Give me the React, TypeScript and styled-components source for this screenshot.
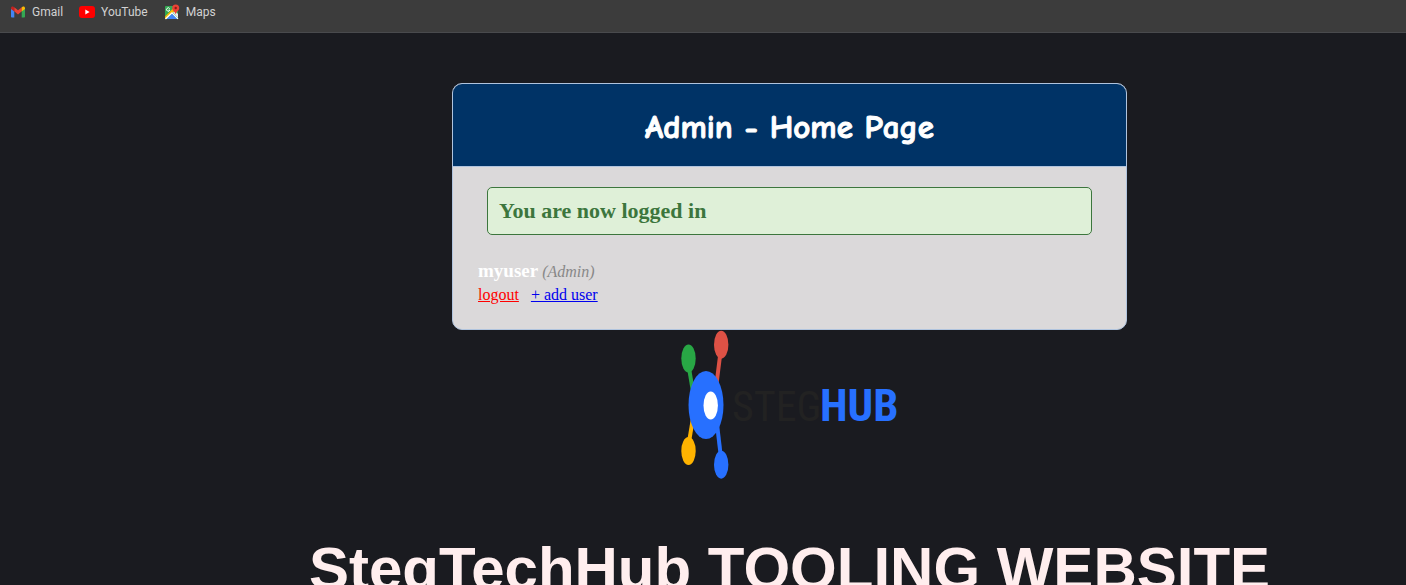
import React from "react";
import styled, { createGlobalStyle } from "styled-components";

const GlobalStyle = createGlobalStyle`
  * { box-sizing: border-box; }
  body {
    margin: 0;
    background: #1a1b20;
    font-family: "Times New Roman", "Liberation Serif", serif;
    font-size: 16px;
  }
`;

const Page = styled.div`
  display: flex;
  flex-direction: column;
  height: 100vh;
  overflow: hidden;
`;

const BookmarksBar = styled.nav`
  display: flex;
  flex: none;
  gap: 16px;
  padding: 4px 10px 12px;
  background: #3c3c3c;
  border-bottom: 1px solid #494a4d;
`;

const Bookmark = styled.a`
  display: flex;
  align-items: center;
  gap: 6px;
  color: #d2d2d2;
  font: 12px/16px "Segoe UI", Roboto, sans-serif;
  text-decoration: none;

  svg { display: block; flex: none; }
`;

const Main = styled.main`
  display: flex;
  flex-direction: column;
  align-items: center;
  padding: 50px 0 0 173px;
`;

const Card = styled.section`
  width: 675px;
  max-width: 100%;
  overflow: hidden;
  background: #dbd9da;
  border: 1px solid #b0c4de;
  border-radius: 10px;
`;

const CardHeader = styled.header`
  padding: 24px 20px 20px;
  background: #003366;
  border-bottom: 1px solid #b0c4de;
  text-align: center;
`;

const CardTitle = styled.h2`
  margin: 0;
  color: #fff;
  font: bold 33px/38px "Comic Sans MS", "Comic Neue", Lato, sans-serif;
  -webkit-text-stroke: 1px #fff;
`;

const CardBody = styled.div`
  padding: 20px 25px 23px;
`;

const Notice = styled.div`
  margin: 0 9px 24px;
  padding: 10px 11px;
  background: #dff0d8;
  border: 1px solid #3c763d;
  border-radius: 5px;
`;

const NoticeText = styled.h3`
  margin: 0;
  color: #3c763d;
  font-size: 22px;
  line-height: 26px;
`;

const UserLine = styled.div`
  line-height: 24px;
`;

const UserName = styled.strong`
  color: #fff;
  font-size: 19px;
`;

const UserRole = styled.i`
  color: #888;
`;

const UserLinks = styled.div`
  display: flex;
  gap: 12px;
  line-height: 22px;
`;

const UserLink = styled.a<{ $color: string }>`
  color: ${(p) => p.$color};
`;

const Logo = styled.svg`
  display: block;
  flex: none;
`;

const SiteTitle = styled.h1`
  margin: 54px 0 0;
  color: #ffeeee;
  font: bold 60px/70px Arial, "Liberation Sans", sans-serif;
  white-space: nowrap;
`;

const GmailIcon = () => (
  <svg width="16" height="16" viewBox="0 0 16 16" aria-hidden="true">
    <path fill="#4285f4" d="M1 4.500v8.200c0 .5.4.8.9.8h2.400V6.800z" />
    <path fill="#34a853" d="M11.700 13.500h2.400c.5 0 .9-.3.9-.8V4.500l-3.300 2.300z" />
    <path fill="#ea4335" d="M4.200 7.300V3.300L8 6.200l3.800-2.900v4L8 10.400z" />
    <path fill="#fbbc04" d="M11.700 3.400v4L15 5V4.200c0-1.600-1.500-2.300-2.500-1.400z" />
    <path fill="#c5221f" d="M4.300 3.400v4L1 5V4.200c0-1.600 1.500-2.300 2.500-1.400z" />
  </svg>
);

const YouTubeIcon = () => (
  <svg width="16" height="16" viewBox="0 0 16 16" aria-hidden="true">
    <rect x="0" y="2" width="16" height="12" rx="3" fill="#f00" />
    <path fill="#fff" d="M6.300 5.600v4.800L10.600 8z" />
  </svg>
);

const MapsIcon = () => (
  <svg width="16" height="16" viewBox="0 0 16 16" aria-hidden="true">
    <rect x="1" y="2" width="13" height="13" rx="1" fill="#34a853" />
    <path fill="#fbbc04" d="M1 12.500L9.500 4l2 2L2.600 15H1z" />
    <path fill="#4285f4" d="M2.500 15L8 9.500l5.500 5.500z" />
    <path fill="#e8eaed" d="M9 8.600l2-1.600 3 3v4z" />
    <path fill="none" stroke="#fff" strokeWidth="1.200" d="M1.500 15L8 8.800l6 6" />
    <path fill="none" stroke="#fff" strokeWidth="1" d="M5.700 4.600a1.700 1.700 0 1 0 .2 1.500H4.400" />
    <path fill="#ea4335" d="M11.700 .5a3.500 3.500 0 0 0-3.500 3.500c0 2.600 2.800 3.400 3.500 6.500.7-3.100 3.500-3.900 3.500-6.500A3.500 3.500 0 0 0 11.700.5z" />
    <circle cx="11.700" cy="4" r="1.200" fill="#8c1b14" />
  </svg>
);

const StegHubLogo = () => (
  <Logo width="220" height="150" viewBox="0 0 220 150" role="img" aria-label="StegHub">
    <g fill="none" strokeWidth="4">
      <path stroke="#28a745" d="M9 38l4 24" />
      <path stroke="#dd5145" d="M40 26l-4 32" />
      <path stroke="#ffb300" d="M9 112l4-24" />
      <path stroke="#2770ff" d="M37 94l4 34" />
    </g>
    <ellipse cx="8.500" cy="28.500" rx="7.200" ry="14" fill="#28a745" />
    <ellipse cx="41.200" cy="14.700" rx="7.200" ry="14" fill="#dd5145" />
    <ellipse cx="8.500" cy="121" rx="7.200" ry="14" fill="#ffb300" />
    <ellipse cx="41.200" cy="134.700" rx="7.200" ry="14" fill="#2770ff" />
    <ellipse cx="26" cy="75" rx="17.500" ry="34" fill="#2770ff" />
    <ellipse cx="30.700" cy="75.500" rx="7.200" ry="14" fill="#fff" />
    <g fontFamily="'Roboto Condensed', Roboto, sans-serif">
      <text x="52" y="91" fontSize="42" fill="#222222">STEG</text>
      <text x="140" y="91" fontSize="45" fontWeight="bold" fill="#2770ff">HUB</text>
    </g>
  </Logo>
);

export default function App() {
  return (
    <>
      <GlobalStyle />
      <Page>
        <BookmarksBar aria-label="Bookmarks">
          <Bookmark href="#gmail"><GmailIcon />Gmail</Bookmark>
          <Bookmark href="#youtube"><YouTubeIcon />YouTube</Bookmark>
          <Bookmark href="#maps"><MapsIcon />Maps</Bookmark>
        </BookmarksBar>
        <Main>
          <Card>
            <CardHeader>
              <CardTitle>Admin - Home Page</CardTitle>
            </CardHeader>
            <CardBody>
              <Notice role="status">
                <NoticeText>You are now logged in</NoticeText>
              </Notice>
              <UserLine>
                <UserName>myuser</UserName> <UserRole>(Admin)</UserRole>
              </UserLine>
              <UserLinks>
                <UserLink href="#logout" $color="#ff0000">logout</UserLink>
                <UserLink href="#add-user" $color="#0000ee">+ add user</UserLink>
              </UserLinks>
            </CardBody>
          </Card>
          <StegHubLogo />
          <SiteTitle>StegTechHub TOOLING WEBSITE</SiteTitle>
        </Main>
      </Page>
    </>
  );
}
